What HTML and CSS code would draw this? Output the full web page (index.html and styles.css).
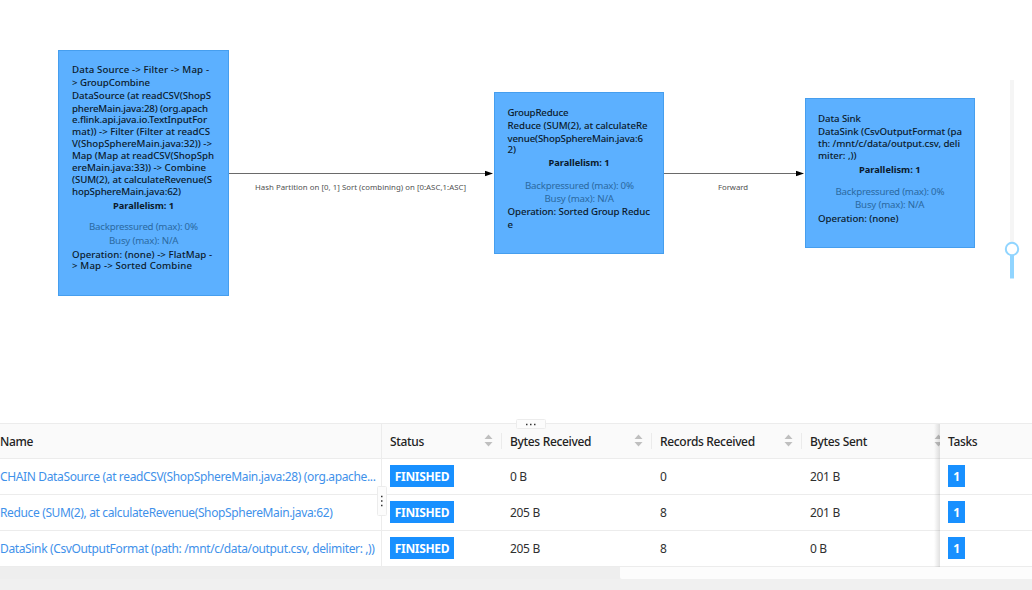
FILE: index.html
```html
<!DOCTYPE html>
<html lang="en">
<head>
<meta charset="utf-8">
<title>Job overview</title>
<link rel="stylesheet" href="styles.css">
</head>
<body>
<main class="page">
<section class="graph">
<svg class="dag" width="1032" height="423" viewBox="0 0 1032 423">
<defs><symbol id="arrow" viewBox="0 0 8 6"><path d="M0 .2 8 3 0 5.8Z"/></symbol></defs>
<g class="edge"><path d="M229 173.5H487M664 173.5H798"/></g>
<use href="#arrow" x="485" y="170.5" width="8" height="6"/>
<use href="#arrow" x="796" y="170.5" width="8" height="6"/>
<g class="edge-label">
<text x="255" y="190" textLength="211">Hash Partition on [0, 1] Sort (combining) on [0:ASC,1:ASC]</text>
<text x="718" y="190" textLength="30">Forward</text>
</g>
<g class="node">
<rect x="58.5" y="50.5" width="170" height="245"/>
<text x="72" y="73" textLength="137">Data Source -&gt; Filter -&gt; Map -</text>
<text x="72" y="86" textLength="78">&gt; GroupCombine</text>
<text x="72" y="99" textLength="139">DataSource (at readCSV(ShopS</text>
<text x="72" y="112" textLength="136">phereMain.java:28) (org.apach</text>
<text x="72" y="123" textLength="135">e.flink.api.java.io.TextInputFor</text>
<text x="72" y="135" textLength="138">mat)) -&gt; Filter (Filter at readCS</text>
<text x="72" y="147" textLength="140">V(ShopSphereMain.java:32)) -&gt;</text>
<text x="72" y="159" textLength="142">Map (Map at readCSV(ShopSph</text>
<text x="72" y="171" textLength="134">ereMain.java:33)) -&gt; Combine</text>
<text x="72" y="183" textLength="140">(SUM(2), at calculateRevenue(S</text>
<text x="72" y="195" textLength="109">hopSphereMain.java:62)</text>
<text class="strong" x="113" y="209" textLength="61">Parallelism: 1</text>
<text class="metric" x="89" y="230" textLength="109">Backpressured (max): 0%</text>
<text class="metric" x="109" y="244" textLength="69.500">Busy (max): N/A</text>
<text x="72" y="258" textLength="140">Operation: (none) -&gt; FlatMap -</text>
<text x="72" y="269" textLength="120">&gt; Map -&gt; Sorted Combine</text>
</g>
<g class="node">
<rect x="494.500" y="92.500" width="169" height="161"/>
<text x="507.500" y="116" textLength="61">GroupReduce</text>
<text x="507.500" y="129" textLength="140">Reduce (SUM(2), at calculateRe</text>
<text x="507.500" y="142" textLength="135.500">venue(ShopSphereMain.java:6</text>
<text x="507.500" y="153" textLength="8.500">2)</text>
<text class="strong" x="548.500" y="166" textLength="61">Parallelism: 1</text>
<text class="metric" x="525" y="189" textLength="109">Backpressured (max): 0%</text>
<text class="metric" x="544.500" y="202" textLength="69.500">Busy (max): N/A</text>
<text x="507.500" y="215" textLength="142.500">Operation: Sorted Group Reduc</text>
<text x="507.500" y="228">e</text>
</g>
<g class="node">
<rect x="805.500" y="98.500" width="169" height="149"/>
<text x="818" y="122" textLength="43">Data Sink</text>
<text x="818" y="135" textLength="144">DataSink (CsvOutputFormat (pa</text>
<text x="818" y="147" textLength="142">th: /mnt/c/data/output.csv, deli</text>
<text x="818" y="159" textLength="38.500">miter: ,))</text>
<text class="strong" x="859" y="173" textLength="61.500">Parallelism: 1</text>
<text class="metric" x="835.500" y="195" textLength="109">Backpressured (max): 0%</text>
<text class="metric" x="855" y="208" textLength="69.500">Busy (max): N/A</text>
<text x="818" y="222" textLength="80.500">Operation: (none)</text>
</g>
<path class="slider-rail" d="M1012 80V249"/>
<path class="slider-track" d="M1012 249V278.500"/>
<circle class="slider-handle" cx="1012" cy="249" r="6.200"/>
</svg>
</section>
<section class="table">
<div class="row head">
<div class="cell name">Name</div>
<div class="cell sortable"><span>Status</span><svg class="sorter" viewBox="0 0 9 13"><path d="M.5 5 4.500.5 8.500 5ZM.5 8 4.500 12.500 8.500 8Z"/></svg></div>
<div class="cell sortable"><span>Bytes Received</span><svg class="sorter" viewBox="0 0 9 13"><path d="M.5 5 4.500.5 8.500 5ZM.5 8 4.500 12.500 8.500 8Z"/></svg></div>
<div class="cell sortable"><span>Records Received</span><svg class="sorter" viewBox="0 0 9 13"><path d="M.5 5 4.500.5 8.500 5ZM.5 8 4.500 12.500 8.500 8Z"/></svg></div>
<div class="cell sortable last"><span>Bytes Sent</span><svg class="sorter" viewBox="0 0 9 13"><path d="M.5 5 4.500.5 8.500 5ZM.5 8 4.500 12.500 8.500 8Z"/></svg></div>
<div class="cell tasks">Tasks</div>
</div>
<div class="row">
<div class="cell name"><a>CHAIN DataSource (at readCSV(ShopSphereMain.java:28) (org.apache...</a></div>
<div class="cell"><span class="tag">FINISHED</span></div>
<div class="cell">0 B</div><div class="cell">0</div><div class="cell">201 B</div>
<div class="cell tasks"><span class="tag count">1</span></div>
</div>
<div class="row">
<div class="cell name"><a>Reduce (SUM(2), at calculateRevenue(ShopSphereMain.java:62)</a></div>
<div class="cell"><span class="tag">FINISHED</span></div>
<div class="cell">205 B</div><div class="cell">8</div><div class="cell">201 B</div>
<div class="cell tasks"><span class="tag count">1</span></div>
</div>
<div class="row">
<div class="cell name"><a>DataSink (CsvOutputFormat (path: /mnt/c/data/output.csv, delimiter: ,))</a></div>
<div class="cell"><span class="tag">FINISHED</span></div>
<div class="cell">205 B</div><div class="cell">8</div><div class="cell">0 B</div>
<div class="cell tasks"><span class="tag count">1</span></div>
</div>
<div class="scrollbar"><div class="thumb"></div></div>
<svg class="grip top" viewBox="0 0 30 10"><rect x=".5" y=".5" width="29" height="9" rx="1"/><path d="M10 5.500h1.500m2.500 0h1.500m2.500 0h1.500"/></svg>
<svg class="grip side" viewBox="0 0 10 30"><rect x=".5" y=".5" width="9" height="29" rx="1"/><path d="M4 10.500h1.500m-1.500 4.500h1.500m-1.500 4.500h1.500"/></svg>
</section>
</main>
</body>
</html>
```
FILE: styles.css
```css
* { box-sizing: border-box; }
body { margin: 0; background: #f0f0f0; font-family: "Noto Sans", "Open Sans", sans-serif; }
.page { width: 1032px; height: 590px; overflow: hidden; }
.graph { height: 423px; background: #fff; }
.dag { display: block; }
.dag text { font-size: 9.7px; fill: #0b1a2c; }
.dag .edge { stroke: #6a6a6a; stroke-width: 1; fill: none; }
.dag .edge-label text { font-size: 7.8px; fill: #505050; }
.node rect { fill: #5cb0ff; stroke: #469eee; }
.node text { font-weight: 500; }
.node .strong { font-weight: 700; font-size: 9.3px; }
.dag .node .metric { font-weight: 400; fill: #2b699f; }
.slider-rail { stroke: #f5f5f5; stroke-width: 4; }
.slider-track { stroke: #91d5ff; stroke-width: 4; }
.slider-handle { fill: #fff; stroke: #91d5ff; stroke-width: 2; }

.table { position: relative; height: 167px; border-top: 1px solid #ececec; font-size: 12px; letter-spacing: -.33px; color: #303030; }
.row { display: grid; grid-template-columns: 382px 120px 150px 150px 138px 92px; height: 36px; background: #fff; }
.head { height: 35px; background: #fafafa; font-weight: 500; color: #222; }
.cell { display: flex; align-items: center; min-width: 0; padding-left: 8px; border-bottom: 1px solid #ececec; white-space: nowrap; }
.name { padding-left: 0; border-right: 1px solid #ececec; }
.name a { color: #3f91ea; letter-spacing: -.36px; }
.sortable { justify-content: space-between; padding-right: 9px; position: relative; }
.sortable::after { content: ""; position: absolute; right: 0; top: 9px; width: 1px; height: 16px; background: #ebebeb; }
.last { padding-right: 0; overflow: hidden; }
.last::after { display: none; }
.last .sorter { margin-right: -3px; }
.sorter { width: 9px; height: 13px; flex: none; fill: #bfbfbf; margin-top: -2px; }
.tasks { position: relative; background: inherit; }
.tasks::before { content: ""; position: absolute; right: 100%; top: 0; bottom: -1px; width: 6px; background: linear-gradient(to left, rgba(0,0,0,.12), rgba(0,0,0,0)); }
.tag { display: flex; align-items: center; justify-content: center; width: 64px; height: 22px; margin-top: -1px; background: #1890ff; color: #fff; font-size: 12px; font-weight: 700; }
.count { width: 17px; }
.scrollbar { display: flex; justify-content: flex-end; height: 12px; background: #eee; }
.thumb { width: 412px; background: #fcfcfc; border-bottom-left-radius: 2px; }
.grip { position: absolute; fill: #fcfcfc; stroke: #ececec; }
.grip path { stroke: #333; stroke-width: 1.5; }
.top { left: 516px; top: -5px; width: 30px; height: 10px; }
.side { left: 377px; top: 62px; width: 10px; height: 30px; }
```
